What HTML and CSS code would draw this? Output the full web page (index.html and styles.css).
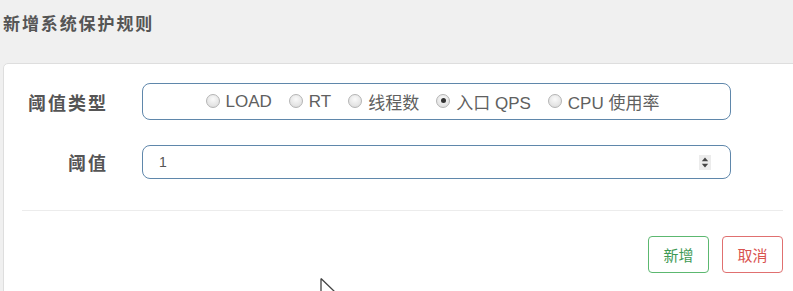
FILE: index.html
```html
<!DOCTYPE html>
<html lang="zh-CN">
<head>
<meta charset="utf-8">
<title>新增系统保护规则</title>
<link rel="stylesheet" href="styles.css">
</head>
<body>
<div class="header"><h1 class="title">新增系统保护规则</h1></div>
<div class="card">
  <form class="form">
    <div class="row">
      <label class="label">阈值类型</label>
      <div class="control radios">
        <span class="radio"><span class="dot"></span>LOAD</span>
        <span class="radio"><span class="dot"></span>RT</span>
        <span class="radio"><span class="dot"></span>线程数</span>
        <span class="radio"><span class="dot checked"></span>入口 QPS</span>
        <span class="radio"><span class="dot"></span>CPU 使用率</span>
      </div>
    </div>
    <div class="row">
      <label class="label label-short">阈值</label>
      <div class="control number">
        <input class="num-input" type="text" value="1">
        <span class="spinner">
          <svg width="12" height="15" viewBox="0 0 12 15"><rect width="12" height="15" fill="#ececec"/><path d="M6 2.5 L9.2 6.3 L2.8 6.3 Z" fill="#444"/><path d="M6 12.5 L9.2 8.7 L2.8 8.7 Z" fill="#444"/></svg>
        </span>
      </div>
    </div>
  </form>
  <div class="divider"></div>
  <div class="actions">
    <button class="btn btn-ok" type="button">新增</button>
    <button class="btn btn-cancel" type="button">取消</button>
  </div>
</div>
<svg class="cursor" width="18" height="16" viewBox="0 0 18 16"><path d="M1 0.5 L1 16 M1 0.5 L15 14" fill="none" stroke="#444" stroke-width="1.3"/></svg>
</body>
</html>
```

FILE: styles.css
```css
html, body {
  margin: 0;
  padding: 0;
  overflow: hidden;
  height: 100%;
}
body {
  background: #f0f0f0;
  font-family: "Liberation Sans", "Noto Sans CJK SC", Arial, sans-serif;
  color: #555;
  position: relative;
}
.header {
  padding: 13px 0 0 3px;
  height: 24px;
}
.title {
  margin: 0;
  font-size: 17px;
  line-height: 24px;
  font-weight: bold;
  letter-spacing: 1.9px;
  color: #555;
}
.card {
  margin: 26px 0 0 3px;
  width: 818px;
  height: 240px;
  box-sizing: border-box;
  background: #fff;
  border: 1px solid #dedede;
  border-radius: 5px;
  padding: 19px 37px 0 18px;
}
.form {
  display: flex;
  flex-direction: column;
  gap: 25px;
  margin: 0;
}
.row {
  display: flex;
  align-items: center;
}
.label {
  width: 86px;
  margin-right: 34px;
  text-align: right;
  font-size: 18px;
  font-weight: bold;
  letter-spacing: 2px;
  color: #555;
}
.control {
  width: 589px;
  box-sizing: border-box;
  border: 1px solid #5f87ab;
  border-radius: 8px;
  background: #fff;
}
.radios {
  height: 37px;
  display: flex;
  justify-content: center;
  align-items: center;
  padding-right: 8px;
  font-size: 17px;
  color: #606060;
}
.radio {
  display: inline-flex;
  align-items: center;
  margin-left: 17px;
}
.radio:first-child { margin-left: 0; }
.dot {
  width: 14px;
  height: 14px;
  box-sizing: border-box;
  border-radius: 50%;
  border: 1px solid #b4b4b4;
  background: radial-gradient(circle at 50% 35%, #fafafa 0%, #e6e6e6 60%, #d6d6d6 100%);
  margin-right: 6px;
  margin-top: -2px;
  position: relative;
}
.dot.checked::after {
  content: "";
  position: absolute;
  left: 3.5px;
  top: 3.5px;
  width: 5px;
  height: 5px;
  border-radius: 50%;
  background: #333;
}
.number {
  height: 34px;
  display: flex;
  align-items: center;
  padding: 0 19px 0 16px;
}
.num-input {
  flex: 1;
  border: 0;
  outline: none;
  padding: 0;
  font-family: "Liberation Sans", Arial, sans-serif;
  font-size: 14px;
  color: #555;
  background: transparent;
}
.spinner {
  display: flex;
  margin-top: 1px;
}
.divider {
  height: 1px;
  background: #ececec;
  margin-top: 31px;
}
.actions {
  display: flex;
  justify-content: flex-end;
  gap: 13px;
  margin-top: 25px;
}
.btn {
  width: 61px;
  height: 37px;
  box-sizing: border-box;
  background: #fff;
  border-radius: 4px;
  font-family: "Noto Sans CJK SC", sans-serif;
  font-size: 15px;
  padding: 0;
}
.btn-ok {
  border: 1px solid #5cb870;
  color: #3f9a55;
}
.btn-cancel {
  border: 1px solid #e07070;
  color: #d9534f;
}
.cursor {
  position: absolute;
  left: 320px;
  top: 278px;
}
```
